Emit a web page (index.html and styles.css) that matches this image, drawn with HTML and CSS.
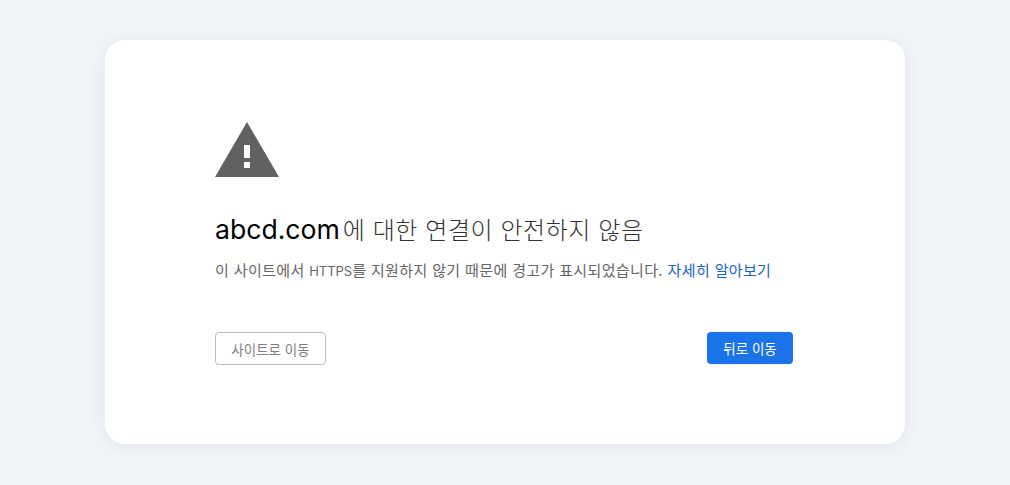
FILE: index.html
```html
<!DOCTYPE html>
<html lang="ko">
<head>
    <meta charset="UTF-8">
    <meta name="viewport" content="width=device-width, initial-scale=1.0">
    <title>abcd.com</title>
    <link rel="stylesheet" href="styles.css">
</head>
<body>
    <div class="card">
        <svg class="warning-icon" viewBox="0 0 64 55" aria-hidden="true">
            <path class="warning-shape" fill-rule="evenodd" d="M32 0L64 55H0ZM29 23V36H35V23ZM29 40V46H35V40Z"/>
        </svg>
        <h1 class="title"><span class="domain">abcd.com</span>에 대한 연결이 안전하지 않음</h1>
        <p class="message">이 사이트에서 <span class="protocol">HTTPS</span>를 지원하지 않기 때문에 경고가 표시되었습니다. <a href="#" class="learn-more">자세히 알아보기</a></p>
        <div class="actions">
            <button class="btn btn-outline">사이트로 이동</button>
            <button class="btn btn-primary">뒤로 이동</button>
        </div>
    </div>
</body>
</html>
```

FILE: styles.css
```css
html, body {
    height: 100%;
}

body {
    margin: 0;
    background-color: #f1f4f9;
    font-family: "Inter", "Noto Sans CJK KR", sans-serif;
    color: #333;
    overflow: hidden;
}

.card {
    box-sizing: border-box;
    width: 800px;
    height: 404px;
    margin: 40px 0 0 105px;
    padding: 82px 112px 0 110px;
    background-color: #fff;
    border-radius: 20px;
    box-shadow: 0 2px 20px rgba(0, 0, 0, 0.07);
}

.warning-icon {
    display: block;
    width: 64px;
    height: 55px;
}

.warning-shape {
    fill: #616161;
}

.title {
    margin: 36px 0 0;
    font-size: 24px;
    line-height: 32px;
    font-weight: 300;
    color: #333;
    letter-spacing: 0.55px;
}

.domain {
    margin-right: 3px;
    font-size: 26.6px;
    font-weight: 400;
    color: #000;
    letter-spacing: 0;
}

.message {
    margin: 13px 0 0;
    font-size: 15px;
    line-height: 22px;
    letter-spacing: 0.36px;
    color: #666;
}

.protocol {
    font-size: 13px;
    letter-spacing: 0;
}

.learn-more {
    color: #1a62c4;
    text-decoration: none;
}

.actions {
    display: flex;
    justify-content: space-between;
    align-items: flex-start;
    margin-top: 50px;
}

.btn {
    font-family: inherit;
    font-size: 13.5px;
    border-radius: 4px;
    cursor: pointer;
}

.btn-outline {
    width: 111px;
    height: 33px;
    background-color: #fff;
    border: 1px solid #bdbdbd;
    color: #808080;
}

.btn-primary {
    width: 86px;
    height: 32px;
    background-color: #1a73e8;
    border: none;
    color: #fff;
}
```
